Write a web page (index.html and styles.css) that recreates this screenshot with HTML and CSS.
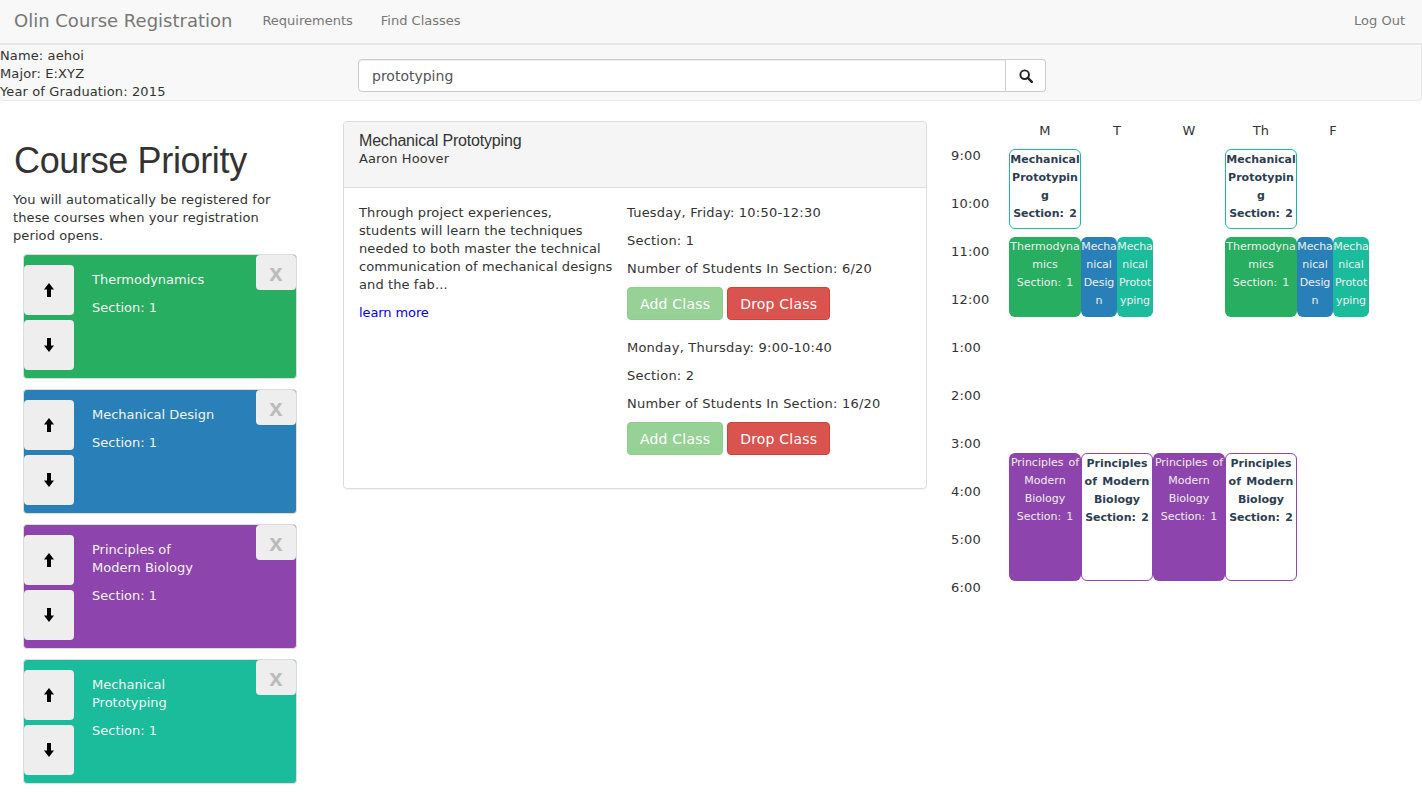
FILE: index.html
```html
<!DOCTYPE html>
<html lang="en">
<head>
<meta charset="utf-8">
<title>Olin Course Registration</title>
<link rel="stylesheet" href="styles.css">
</head>
<body>
<nav class="navbar">
  <a class="brand">Olin Course Registration</a>
  <a class="nav-link">Requirements</a>
  <a class="nav-link">Find Classes</a>
  <a class="nav-link logout">Log Out</a>
</nav>
<section class="infobar">
  <div class="student">
    <div>Name: aehoi</div>
    <div>Major: E:XYZ</div>
    <div>Year of Graduation: 2015</div>
  </div>
  <div class="search">
    <div class="search-input">prototyping</div>
    <button class="search-btn" aria-label="Search">
      <svg viewBox="0 0 16 16" width="14" height="14"><circle cx="6.5" cy="6.5" r="4.9" fill="none" stroke="#222" stroke-width="2.2"/><path d="M10 10l4.6 4.6" stroke="#222" stroke-width="2.8" stroke-linecap="round"/></svg>
    </button>
  </div>
</section>
<div class="page">
  <aside class="sidebar">
    <h1>Course Priority</h1>
    <p class="intro">You will automatically be registered for these courses when your registration period opens.</p>
    <div class="cards">
      <article class="card green">
        <div class="arrows">
          <button class="arrow"><svg viewBox="0 0 12 14" width="12" height="14"><path d="M6 0l5 6.4H8V14H4V6.4H1z"/></svg></button>
          <button class="arrow"><svg viewBox="0 0 12 14" width="12" height="14"><path d="M6 14L1 7.6h3V0h4v7.6h3z"/></svg></button>
        </div>
        <div class="card-text"><p>Thermodynamics</p><p>Section: 1</p></div>
        <button class="remove">x</button>
      </article>
      <article class="card blue">
        <div class="arrows">
          <button class="arrow"><svg viewBox="0 0 12 14" width="12" height="14"><path d="M6 0l5 6.4H8V14H4V6.4H1z"/></svg></button>
          <button class="arrow"><svg viewBox="0 0 12 14" width="12" height="14"><path d="M6 14L1 7.6h3V0h4v7.6h3z"/></svg></button>
        </div>
        <div class="card-text"><p>Mechanical Design</p><p>Section: 1</p></div>
        <button class="remove">x</button>
      </article>
      <article class="card purple">
        <div class="arrows">
          <button class="arrow"><svg viewBox="0 0 12 14" width="12" height="14"><path d="M6 0l5 6.4H8V14H4V6.4H1z"/></svg></button>
          <button class="arrow"><svg viewBox="0 0 12 14" width="12" height="14"><path d="M6 14L1 7.6h3V0h4v7.6h3z"/></svg></button>
        </div>
        <div class="card-text"><p>Principles of Modern Biology</p><p>Section: 1</p></div>
        <button class="remove">x</button>
      </article>
      <article class="card teal">
        <div class="arrows">
          <button class="arrow"><svg viewBox="0 0 12 14" width="12" height="14"><path d="M6 0l5 6.4H8V14H4V6.4H1z"/></svg></button>
          <button class="arrow"><svg viewBox="0 0 12 14" width="12" height="14"><path d="M6 14L1 7.6h3V0h4v7.6h3z"/></svg></button>
        </div>
        <div class="card-text"><p>Mechanical Prototyping</p><p>Section: 1</p></div>
        <button class="remove">x</button>
      </article>
    </div>
  </aside>
  <main class="results">
    <article class="panel">
      <header class="panel-head">
        <h2>Mechanical Prototyping</h2>
        <div class="teacher">Aaron Hoover</div>
      </header>
      <div class="panel-body">
        <div class="desc">
          <p>Through project experiences, students will learn the techniques needed to both master the technical communication of mechanical designs and the fab...</p>
          <a class="more">learn more</a>
        </div>
        <div class="sections">
          <div class="section">
            <p>Tuesday, Friday: 10:50-12:30</p>
            <p>Section: 1</p>
            <p>Number of Students In Section: 6/20</p>
            <div class="actions"><button class="btn add">Add Class</button><button class="btn drop">Drop Class</button></div>
          </div>
          <div class="section">
            <p>Monday, Thursday: 9:00-10:40</p>
            <p>Section: 2</p>
            <p>Number of Students In Section: 16/20</p>
            <div class="actions"><button class="btn add">Add Class</button><button class="btn drop">Drop Class</button></div>
          </div>
        </div>
      </div>
    </article>
  </main>
  <section class="calendar">
    <div class="times">
      <div>9:00</div><div>10:00</div><div>11:00</div><div>12:00</div><div>1:00</div><div>2:00</div><div>3:00</div><div>4:00</div><div>5:00</div><div>6:00</div>
    </div>
    <div class="week">
      <div class="days"><div>M</div><div>T</div><div>W</div><div>Th</div><div>F</div></div>
      <div class="slots">
        <div class="slot outline o-teal d-m t-morning">Mechanical Prototyping<br>Section: 2</div>
        <div class="slot outline o-teal d-th t-morning">Mechanical Prototyping<br>Section: 2</div>
        <div class="slot green d-m t-noon">Thermodynamics<br>Section: 1</div>
        <div class="slot narrow blue d-t1 t-noon">Mechanical Design</div>
        <div class="slot narrow teal d-t2 t-noon">Mechanical Prototyping</div>
        <div class="slot green d-th t-noon">Thermodynamics<br>Section: 1</div>
        <div class="slot narrow blue d-f1 t-noon">Mechanical Design</div>
        <div class="slot narrow teal d-f2 t-noon">Mechanical Prototyping</div>
        <div class="slot purple d-m t-late">Principles of Modern Biology<br>Section: 1</div>
        <div class="slot outline o-purple d-t t-late">Principles of Modern Biology<br>Section: 2</div>
        <div class="slot purple d-w t-late">Principles of Modern Biology<br>Section: 1</div>
        <div class="slot outline o-purple d-th t-late">Principles of Modern Biology<br>Section: 2</div>
      </div>
    </div>
  </section>
</div>
</body>
</html>
```
FILE: styles.css
```css
* { box-sizing: border-box; }
html, body { margin: 0; padding: 0; }
body {
  font-family: "DejaVu Sans", Verdana, sans-serif;
  font-size: 13px;
  line-height: 18px;
  letter-spacing: .22px;
  color: #333;
  background: #fff;
  overflow: hidden;
}
p { margin: 0; }
button { font-family: inherit; cursor: pointer; }

.navbar {
  display: flex;
  align-items: center;
  height: 45px;
  background: #f8f8f8;
  border-bottom: 2px solid #e7e7e7;
  color: #777;
  padding: 0 17px 2px 14px;
  letter-spacing: 0;
}
.brand { font-size: 18px; margin-right: 30px; }
.nav-link { margin-right: 28px; }
.logout { margin: 0 0 0 auto; }

.infobar {
  display: flex;
  height: 56px;
  background: #f8f8f8;
  border-right: 1px solid #e7e7e7;
  border-bottom: 1px solid #e7e7e7;
  border-radius: 0 0 4px 4px;
}
.student { width: 358px; flex: none; color: #333; padding-top: 2px; letter-spacing: .12px; }
.search { display: flex; align-items: flex-start; padding-top: 14px; }
.search-input {
  width: 648px;
  height: 33px;
  background: #fff;
  border: 1px solid #ccc;
  border-radius: 4px 0 0 4px;
  box-shadow: inset 0 1px 1px rgba(0,0,0,.075);
  padding: 7px 13px;
  font-size: 14px;
  letter-spacing: 0;
  color: #555;
}
.search-btn {
  width: 40px;
  height: 33px;
  background: #fff;
  border: 1px solid #ccc;
  border-left: 0;
  border-radius: 0 4px 4px 0;
  display: flex;
  align-items: center;
  justify-content: center;
  padding: 0;
}

.page { display: flex; }
.sidebar { width: 343px; flex: none; padding: 40px 0 0 14px; }
h1 {
  font-family: "Liberation Sans", Arial, sans-serif;
  font-size: 36px;
  font-weight: 400;
  line-height: 40px;
  letter-spacing: -.35px;
  margin: 0 0 10px;
}
.intro { width: 266px; margin: 0 0 9px -1px; letter-spacing: .1px; }
.cards { display: flex; flex-direction: column; gap: 10px; margin-left: 9px; width: 274px; }
.card {
  position: relative;
  display: flex;
  height: 125px;
  border: 1px solid #ddd;
  border-radius: 4px;
  color: #f4f4f4;
}
.green { background: #27ae60; }
.blue { background: #2980b9; }
.purple { background: #8e44ad; }
.teal { background: #1abc9c; }
.arrows { display: flex; flex-direction: column; gap: 5px; padding-top: 10px; }
.arrow {
  width: 50px;
  height: 50px;
  background: #eee;
  border: 0;
  border-radius: 4px;
  padding: 0;
  display: flex;
  align-items: center;
  justify-content: center;
}
.card-text { padding: 16px 0 0 18px; width: 145px; letter-spacing: 0; }
.card-text p { margin-bottom: 10px; }
.remove {
  position: absolute;
  top: 0;
  right: 0;
  width: 40px;
  height: 35px;
  background: #eee;
  border: 0;
  border-radius: 4px;
  color: #bbb;
  font: 700 24px/30px "Liberation Sans", Arial, sans-serif;
  padding: 0;
}

.results { width: 584px; flex: none; padding-top: 20px; }
.panel {
  border: 1px solid #ddd;
  border-radius: 4px;
  box-shadow: 0 1px 1px rgba(0,0,0,.05);
  height: 368px;
}
.panel-head {
  height: 66px;
  background: #f5f5f5;
  border-bottom: 1px solid #ddd;
  border-radius: 3px 3px 0 0;
  padding: 10px 15px;
}
h2 {
  font-family: "Liberation Sans", Arial, sans-serif;
  font-size: 16px;
  font-weight: 400;
  line-height: 18px;
  letter-spacing: -.18px;
  margin: 0;
}
.teacher { letter-spacing: .1px; }
.panel-body { display: flex; padding: 16px 15px 15px; }
.desc { width: 268px; flex: none; padding-right: 14px; letter-spacing: .1px; }
.desc p { margin-bottom: 10px; }
.more { color: #00e; letter-spacing: -.1px; }
.section p { margin-bottom: 10px; }
.section p:nth-child(3) { margin-bottom: 9px; }
.section { margin-bottom: 19px; }
.actions { display: flex; gap: 4px; }
.btn {
  height: 33px;
  padding: 0 12px;
  font-size: 14px;
  letter-spacing: .2px;
  color: #fff;
  border: 1px solid;
  border-radius: 4px;
}
.add { background: #96d196; border-color: #8fcd8f; }
.drop { background: #d9534f; border-color: #d43f3a; }

.calendar { display: flex; padding: 20px 0 0 24px; }
.times { width: 58px; flex: none; padding-top: 11px; line-height: 48px; }
.days { display: grid; grid-template-columns: repeat(5, 72px); height: 28px; padding-top: 1px; text-align: center; }
.slots {
  display: grid;
  grid-template-columns: repeat(10, 36px);
  grid-template-rows: repeat(54, 8px);
}
.slot {
  font-size: 11px;
  line-height: 18px;
  letter-spacing: 0;
  word-spacing: 1.5px;
  text-align: center;
  color: #eee;
  border-radius: 6px;
  padding-top: 1px;
  overflow: hidden;
  overflow-wrap: anywhere;
}
.narrow { letter-spacing: -.1px; }
.outline {
  background: #fff;
  color: #2c3e50;
  font-weight: 700;
  border: 1px solid;
}
.o-teal { border-color: #1abc9c; }
.o-purple { border-color: #8e44ad; }
.d-m { grid-column: 1 / 3; }
.d-t { grid-column: 3 / 5; }
.d-t1 { grid-column: 3 / 4; }
.d-t2 { grid-column: 4 / 5; }
.d-w { grid-column: 5 / 7; }
.d-th { grid-column: 7 / 9; }
.d-f1 { grid-column: 9 / 10; }
.d-f2 { grid-column: 10 / 11; }
.t-morning { grid-row: 1 / 11; }
.t-noon { grid-row: 12 / 22; }
.t-late { grid-row: 39 / 55; }
```
